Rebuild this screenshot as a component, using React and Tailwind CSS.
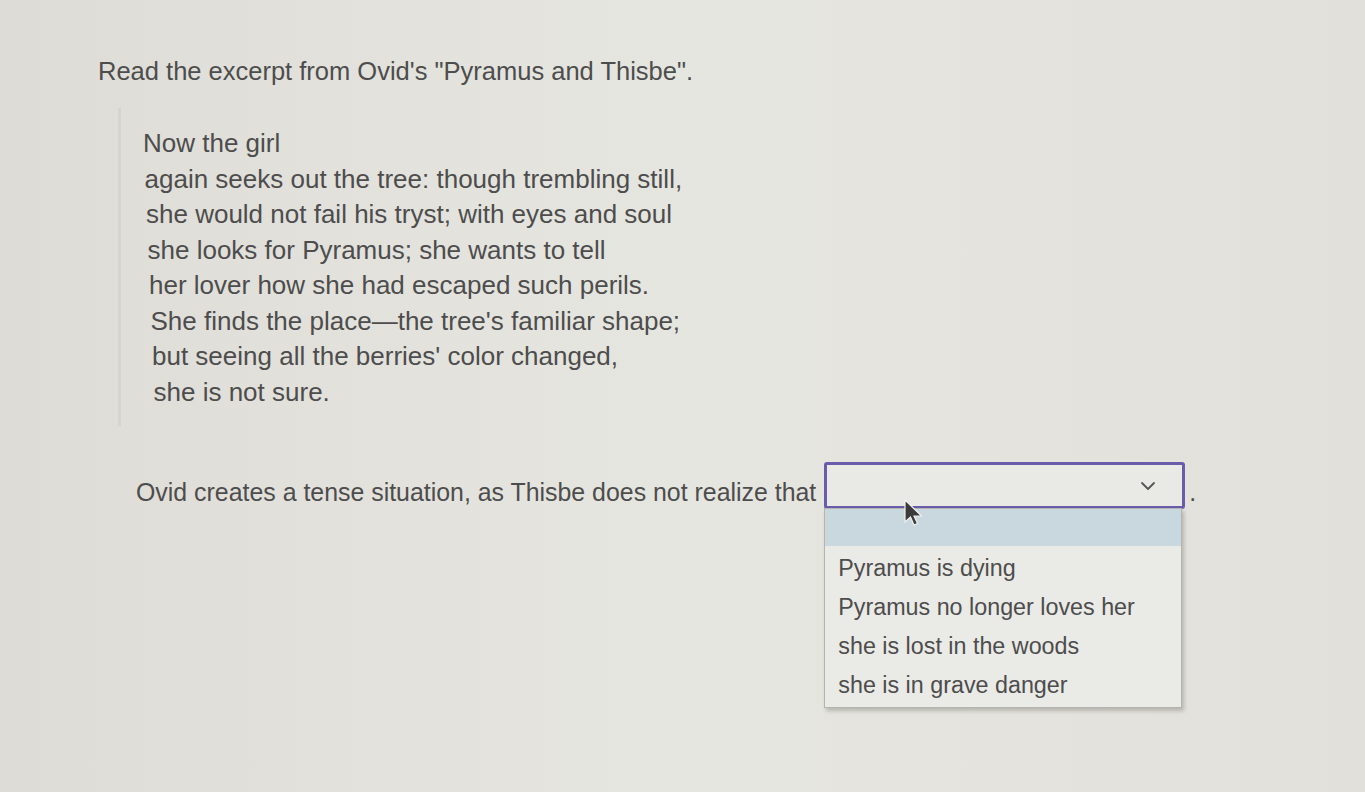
import { ChevronDown } from "lucide-react";

const lines = [
  "Now the girl",
  "again seeks out the tree: though trembling still,",
  "she would not fail his tryst; with eyes and soul",
  "she looks for Pyramus; she wants to tell",
  "her lover how she had escaped such perils.",
  "She finds the place\u2014the tree's familiar shape;",
  "but seeing all the berries' color changed,",
  "she is not sure.",
];

const options = [
  "Pyramus is dying",
  "Pyramus no longer loves her",
  "she is lost in the woods",
  "she is in grave danger",
];

export default function App() {
  return (
    <div
      className="w-[1365px] h-[792px] overflow-hidden bg-gradient-to-r from-[#dedcd6] via-[#e6e6e0] to-[#e2e0da] text-[#4d4d4d]"
      style={{ fontFamily: '"Liberation Sans", Arial, sans-serif' }}
    >
      <div className="pl-[98px] pt-[54px]">
        <h1 className="text-[25.5px] leading-[34px]">
          Read the excerpt from Ovid's "Pyramus and Thisbe".
        </h1>

        <div className="mt-[20px] ml-[20px] border-l-[3px] border-[#d6d4ce] pl-[22px] pt-[18px] pb-[16px] w-[640px] text-[26px]">
          {lines.map((l, i) => (
            <div key={i} className="leading-[35.5px]" style={{ paddingLeft: i * 1.5 }}>
              {l}
            </div>
          ))}
        </div>

        <div className="mt-[36px] ml-[38px] flex items-start text-[24.9px]">
          <span className="leading-[30px] mt-[15px] whitespace-nowrap">
            Ovid creates a tense situation, as Thisbe does not realize that
          </span>
          <div className="relative ml-[8px]">
            <div className="w-[361px] h-[47px] border-[3px] border-[#6a5cab] rounded-[3px] bg-[#e9e9e5] flex items-center justify-end pr-[22px]">
              <ChevronDown size={24} strokeWidth={1.8} className="text-[#555]" />
            </div>
            <div className="absolute left-0 top-[46px] w-[358px] bg-[#eaeae6] border border-[#b5b5b0] shadow-[2px_3px_4px_rgba(0,0,0,0.2)] pb-[2px] text-[23.3px]">
              <div className="h-[37px] bg-[#c9d8df]"></div>
              <div className="pt-[3px]">
                {options.map((o) => (
                  <div key={o} className="px-[13px] leading-[39px] h-[39px]">
                    {o}
                  </div>
                ))}
              </div>
            </div>
            <svg
              className="absolute left-[78px] top-[36px]"
              width="24"
              height="30"
              viewBox="0 0 24 30"
            >
              <path
                d="M3 2 L3 24 L8.5 19 L12 27 L15.5 25.5 L12 18 L19.5 18 Z"
                fill="#3a3a3a"
                stroke="#f0f0f0"
                strokeWidth="1.2"
              />
            </svg>
          </div>
          <span className="leading-[30px] mt-[15px] ml-[4px]">.</span>
        </div>
      </div>
    </div>
  );
}
